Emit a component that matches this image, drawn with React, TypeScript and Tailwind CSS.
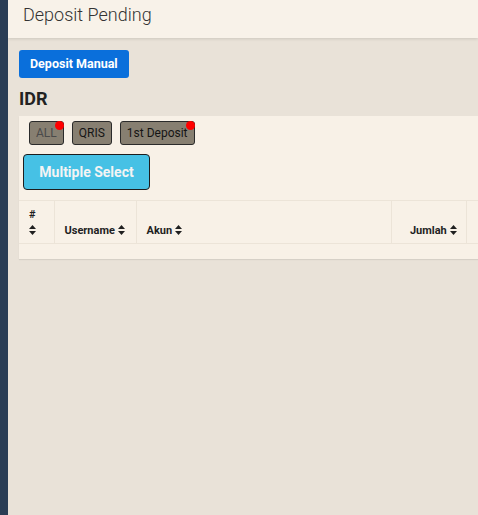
import React from "react";

function SortIcon() {
  return (
    <svg width="7" height="10" viewBox="0 0 7 10" className="inline-block align-[-1px]">
      <path d="M3.5 0 L7 4 L0 4 Z M3.5 10 L7 6 L0 6 Z" fill="#1f1f1f" />
    </svg>
  );
}

function FilterChip({ label, dot, dim }: { label: string; dot?: boolean; dim?: boolean }) {
  return (
    <button
      className={`relative h-[24px] px-[6px] rounded-[3px] border border-[#2b2b2b] bg-[#877f71] text-[12px] leading-none ${
        dim ? "text-[#4a4a4a]" : "text-[#151515]"
      }`}
    >
      {label}
      {dot && <span className="absolute -top-[1px] -right-[1px] w-[9px] h-[9px] rounded-full bg-[#ff0000]" />}
    </button>
  );
}

export default function App() {
  return (
    <div className="flex min-h-[515px] w-full overflow-hidden font-['Roboto',sans-serif] text-[#222]">
      <aside className="w-[8px] shrink-0 bg-[#2a3d55]" />
      <main className="flex-1 min-w-0 bg-[#e9e2d8] overflow-hidden">
        <header className="h-[38px] bg-[#f8f2e9] shadow-[0_1px_3px_rgba(0,0,0,0.12)] flex items-center pl-[15px]">
          <h1 className="text-[18px] font-light text-[#333] -mt-[10px]">Deposit Pending</h1>
        </header>

        <div className="pl-[11px] pt-[12px]">
          <button className="h-[28px] px-[11px] rounded-[3px] bg-[#0a6fdb] text-white text-[12.5px] font-bold">
            Deposit Manual
          </button>
          <h2 className="mt-[10px] text-[18px] font-bold leading-[22px] text-[#222]">IDR</h2>

          <section className="mt-[6px] w-[520px] bg-[#f8f1e7] shadow-[0_1px_1px_rgba(0,0,0,0.08)]">
            <div className="flex gap-[8px] pl-[10px] pt-[5px]">
              <FilterChip label="ALL" dot dim />
              <FilterChip label="QRIS" />
              <FilterChip label="1st Deposit" dot />
            </div>
            <div className="pl-[4px] pt-[9px]">
              <button className="h-[36px] w-[127px] rounded-[4px] border border-[#1d1d1d] bg-[#46c1e5] text-[#f4f4f4] text-[14px] font-bold">
                Multiple Select
              </button>
            </div>

            <table className="mt-[10px] border-collapse text-[11px] font-bold text-[#1f1f1f]">
              <thead>
                <tr className="h-[43px] border-y border-[#ece4d8]">
                  <th className="w-[35px] pl-[10px] pb-[4px] text-left align-bottom font-bold leading-[16px] border-r border-[#ece4d8]">
                    #
                    <br />
                    <SortIcon />
                  </th>
                  <th className="w-[82px] pl-[10px] pb-[4px] text-left align-bottom font-bold border-r border-[#ece4d8]">
                    Username <SortIcon />
                  </th>
                  <th className="w-[255px] pl-[10px] pb-[4px] text-left align-bottom font-bold border-r border-[#ece4d8]">
                    Akun <SortIcon />
                  </th>
                  <th className="w-[75px] pr-[9px] pb-[4px] text-right align-bottom font-bold border-r border-[#ece4d8]">
                    Jumlah <SortIcon />
                  </th>
                  <th className="w-[70px]" />
                </tr>
              </thead>
              <tbody>
                <tr className="h-[15px]">
                  <td colSpan={5} />
                </tr>
              </tbody>
            </table>
          </section>
        </div>
      </main>
    </div>
  );
}
